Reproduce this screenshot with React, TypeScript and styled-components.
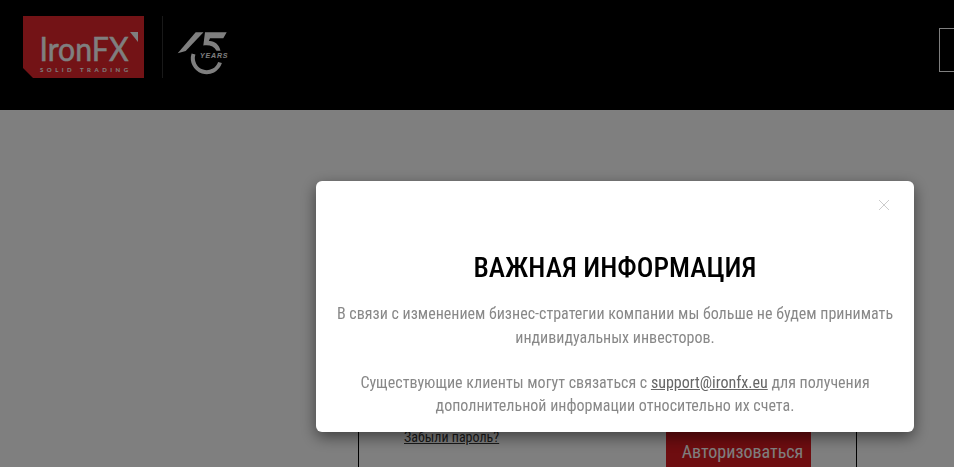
import React from 'react';
import styled, { createGlobalStyle } from 'styled-components';

const GlobalStyle = createGlobalStyle`
  html, body {
    margin: 0;
    height: 100%;
    overflow: hidden;
    background: #fff;
    font-family: Roboto, "Liberation Sans", sans-serif;
    font-stretch: 75%;
  }
`;

const Page = styled.div`
  display: flex;
  flex-direction: column;
  height: 467px;
  overflow: hidden;
`;

const Header = styled.header`
  flex: none;
  height: 110px;
  background: #000;
  display: flex;
  align-items: flex-start;
  justify-content: space-between;
  padding: 16px 0 0 23px;
  box-sizing: border-box;
  overflow: hidden;
`;

const Brand = styled.div`
  display: flex;
  align-items: flex-start;
`;

const Divider = styled.div`
  width: 1px;
  height: 62px;
  margin: 0 14px 0 18px;
  background: #333;
`;

const Badge = styled.div`
  margin-top: 14px;
`;

const HeaderButton = styled.div`
  flex: none;
  width: 40px;
  height: 44px;
  margin-top: 12px;
  margin-right: -25px;
  box-sizing: border-box;
  border: 1px solid #fff;
`;

const Main = styled.main`
  flex: 1;
  display: flex;
  padding: 0 97px 0 358px;
`;

const LoginBox = styled.div`
  flex: 1;
  box-sizing: border-box;
  border-left: 1px solid #000;
  border-right: 1px solid #000;
  margin-top: 290px;
  display: flex;
  align-items: flex-start;
  justify-content: space-between;
  padding: 30px 45px 0 45px;
`;

const ForgotLink = styled.a`
  color: #333;
  font-size: 14px;
  line-height: 16px;
  margin-top: -1px;
  text-decoration: underline;
`;

const SubmitButton = styled.button`
  width: 145px;
  height: 50px;
  margin-top: -4px;
  padding: 0 0 0 8px;
  border: 0;
  background: #dc1a20;
  color: #fff;
  font-family: inherit;
  font-stretch: inherit;
  font-size: 18px;
`;

const Overlay = styled.div`
  position: fixed;
  inset: 0;
  background: rgba(0, 0, 0, 0.5);
`;

const Modal = styled.section`
  position: absolute;
  left: 316px;
  top: 181px;
  width: 598px;
  height: 251px;
  box-sizing: border-box;
  padding: 68px 15px 0;
  background: #fff;
  border-radius: 6px;
  box-shadow: 0 5px 15px rgba(0, 0, 0, 0.5);
  text-align: center;
`;

const CloseButton = styled.button`
  position: absolute;
  top: 18px;
  right: 24px;
  width: 12px;
  height: 12px;
  padding: 0;
  border: 0;
  background: none;
  display: block;
  svg {
    display: block;
  }
`;

const Title = styled.h2`
  margin: 0 0 15px;
  color: #000;
  font-size: 27.7px;
  line-height: 38px;
  font-weight: 500;
`;

const Text = styled.p<{ $leading: number }>`
  margin: 0 0 21px;
  color: #888;
  font-size: 16px;
  line-height: ${({ $leading }) => $leading}px;
  a {
    color: #666;
    text-decoration: underline;
  }
`;

const LogoText = styled.text`
  font-family: Lato, "Liberation Sans", sans-serif;
  font-stretch: normal;
  fill: #fff;
`;

const YearsText = styled.text`
  font-family: "Liberation Sans", sans-serif;
  font-stretch: normal;
  font-style: italic;
  font-weight: 700;
  fill: #fff;
`;

function IronFxLogo() {
  return (
    <svg width="121" height="62" viewBox="0 0 121 62">
      <path d="M0 0H121V62H10L0 52Z" fill="#e6262c" />
      <path d="M107 16H115V26Z" fill="#fff" />
      <LogoText x="16.5" y="45" fontSize="33" fontWeight="400" stroke="#fff" strokeWidth="0.5" textLength="89" lengthAdjust="spacingAndGlyphs">
        IronFX
      </LogoText>
      <LogoText x="17" y="56" fontSize="6" fontWeight="700" textLength="88">
        SOLID TRADING
      </LogoText>
    </svg>
  );
}

function YearsBadge() {
  return (
    <svg width="52" height="46" viewBox="0 0 52 46">
      <path d="M0.7 23.3L18.7 2.3H26.5L8.7 21Z" fill="#fff" />
      <path d="M28 2.3H49.7L46.3 8.3H33L31.8 11C37 10.5 42 14 43.5 20.7H39.5C37 16 32 14.5 26.3 15.5Z" fill="#fff" />
      <path d="M16.5 24A13.5 13.5 0 0 0 43 32.5" fill="none" stroke="#fff" strokeWidth="4" />
      <YearsText x="23" y="27.5" fontSize="7" textLength="27.5">
        YEARS
      </YearsText>
    </svg>
  );
}

export default function App() {
  return (
    <>
      <GlobalStyle />
      <Page>
        <Header>
          <Brand>
            <IronFxLogo />
            <Divider />
            <Badge>
              <YearsBadge />
            </Badge>
          </Brand>
          <HeaderButton />
        </Header>
        <Main>
          <LoginBox>
            <ForgotLink href="#">Забыли пароль?</ForgotLink>
            <SubmitButton>Авторизоваться</SubmitButton>
          </LoginBox>
        </Main>
      </Page>
      <Overlay>
        <Modal>
          <CloseButton aria-label="Закрыть">
            <svg width="12" height="12" viewBox="0 0 12 12">
              <path d="M1 1L11 11M11 1L1 11" stroke="#ccc" strokeWidth="1" />
            </svg>
          </CloseButton>
          <Title>ВАЖНАЯ ИНФОРМАЦИЯ</Title>
          <Text $leading={24}>
            В связи с изменением бизнес-стратегии компании мы больше не будем принимать индивидуальных инвесторов.
          </Text>
          <Text $leading={23}>
            Существующие клиенты могут связаться с <a href="#">support@ironfx.eu</a> для получения дополнительной информации относительно их счета.
          </Text>
        </Modal>
      </Overlay>
    </>
  );
}
